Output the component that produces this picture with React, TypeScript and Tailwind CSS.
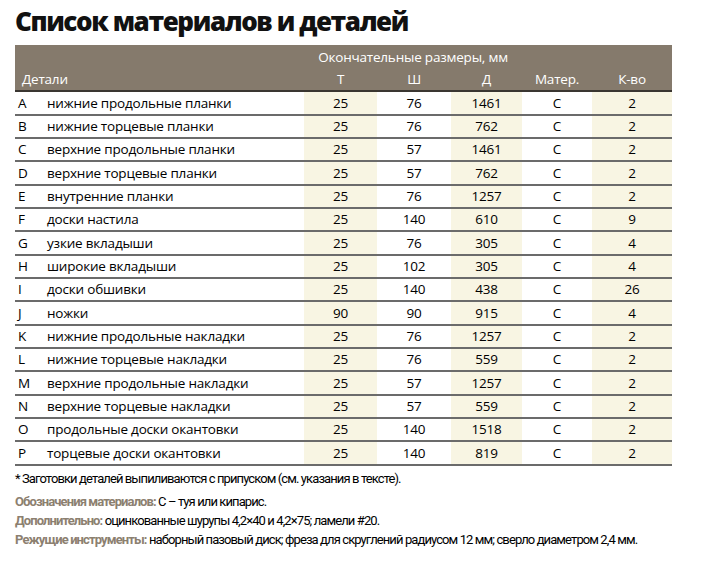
const rows: [string, string, number, number, number, number][] = [
  ['A', 'нижние продольные планки', 25, 76, 1461, 2],
  ['B', 'нижние торцевые планки', 25, 76, 762, 2],
  ['C', 'верхние продольные планки', 25, 57, 1461, 2],
  ['D', 'верхние торцевые планки', 25, 57, 762, 2],
  ['E', 'внутренние планки', 25, 76, 1257, 2],
  ['F', 'доски настила', 25, 140, 610, 9],
  ['G', 'узкие вкладыши', 25, 76, 305, 4],
  ['H', 'широкие вкладыши', 25, 102, 305, 4],
  ['I', 'доски обшивки', 25, 140, 438, 26],
  ['J', 'ножки', 90, 90, 915, 4],
  ['K', 'нижние продольные накладки', 25, 76, 1257, 2],
  ['L', 'нижние торцевые накладки', 25, 76, 559, 2],
  ['M', 'верхние продольные накладки', 25, 57, 1257, 2],
  ['N', 'верхние торцевые накладки', 25, 57, 559, 2],
  ['O', 'продольные доски окантовки', 25, 140, 1518, 2],
  ['P', 'торцевые доски окантовки', 25, 140, 819, 2],
]

export default function App() {
  return (
    <div className="w-[701px] h-[564px] bg-white pl-[15px] pt-[3px] text-black font-['Open_Sans','Noto_Sans',sans-serif]">
      <h1 className="text-[26px] leading-[36px] font-extrabold tracking-[-1.4px] text-[#111]">
        Список материалов и деталей
      </h1>

      <table className="mt-[6px] w-[657px] border-collapse table-fixed text-[13.5px] tracking-[-0.2px]">
        <colgroup>
          <col className="w-[289px]" />
          <col className="w-[73px]" />
          <col className="w-[74px]" />
          <col className="w-[71px]" />
          <col className="w-[70px]" />
          <col className="w-[80px]" />
        </colgroup>
        <thead className="bg-[#857a6c] text-white">
          <tr className="h-[22px]">
            <th />
            <th colSpan={3} className="font-normal text-center pt-[2px]">
              Окончательные размеры, мм
            </th>
            <th />
            <th />
          </tr>
          <tr className="h-[24px] border-b-2 border-[#3a3631]">
            <th className="font-normal text-left pl-[7px]">Детали</th>
            <th className="font-normal">Т</th>
            <th className="font-normal">Ш</th>
            <th className="font-normal">Д</th>
            <th className="font-normal">Матер.</th>
            <th className="font-normal">К-во</th>
          </tr>
        </thead>
        <tbody>
          {rows.map(([id, name, t, w, l, q]) => (
            <tr key={id} className="h-[23.33px] border-b-2 border-[#6b6b6b]">
              <td className="p-0">
                <div className="flex">
                  <span className="w-[32px] pl-[3px]">{id}</span>
                  <span>{name}</span>
                </div>
              </td>
              <td className="bg-[#f8f5e3] text-center">{t}</td>
              <td className="text-center">{w}</td>
              <td className="bg-[#f8f5e3] text-center">{l}</td>
              <td className="text-center">С</td>
              <td className="bg-[#f8f5e3] text-center">{q}</td>
            </tr>
          ))}
        </tbody>
      </table>

      <div className="mt-[3px] text-[13px] leading-[19px] font-['Roboto',sans-serif] tracking-[-0.9px]">
        <p>* Заготовки деталей выпиливаются с припуском (см. указания в тексте).</p>
        <p className="mt-[4px]">
          <span className="font-bold text-[#8c8070]">Обозначения материалов: </span> С – туя или кипарис.
        </p>
        <p>
          <span className="font-bold text-[#8c8070]">Дополнительно:</span> оцинкованные шурупы 4,2×40 и 4,2×75; ламели #20.
        </p>
        <p>
          <span className="font-bold text-[#8c8070]">Режущие инструменты:</span> наборный пазовый диск; фреза для скруглений радиусом 12 мм; сверло диаметром 2,4 мм.
        </p>
      </div>
    </div>
  )
}
